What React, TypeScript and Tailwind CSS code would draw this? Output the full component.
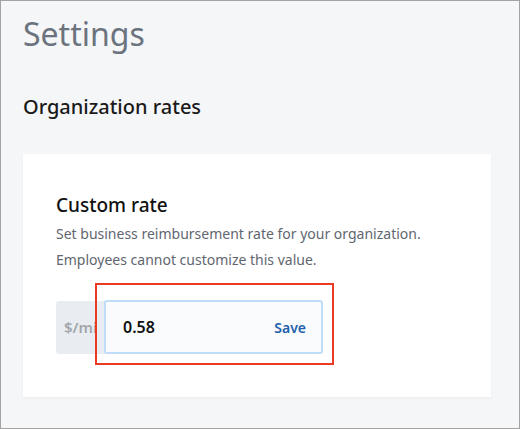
import React from "react";

export default function App() {
  return (
    <div
      className="w-[520px] h-[429px] bg-[#f5f6f8] border border-[#a3a3a3] overflow-hidden"
      style={{ fontFamily: '"Noto Sans", "Open Sans", sans-serif' }}
    >
      <div className="pl-[22px] pt-[11px]">
        <h1 className="text-[32px] leading-[44px] text-[#6b737e] font-normal">Settings</h1>
        <h2 className="mt-[38px] text-[20px] leading-[26px] text-[#1a1a1a] font-medium">Organization rates</h2>
      </div>
      <div className="ml-[22px] mt-[34px] w-[468px] h-[243px] bg-white shadow-[0_1px_3px_rgba(0,0,0,0.04)] pl-[33px] pt-[38px]">
        <h3 className="text-[19px] leading-[26px] text-[#111] font-medium">Custom rate</h3>
        <p className="mt-[3px] text-[14px] leading-[26px] text-[#5f6670]">
          Set business reimbursement rate for your organization.
          <br />
          Employees cannot customize this value.
        </p>
        <div className="relative mt-[27px] flex items-center">
          <div className="w-[60px] h-[53px] rounded-[3px] bg-[#e9edf1] flex items-center pl-[8px] text-[15px] text-[#a2a6ab] font-semibold overflow-hidden">
            $/mi
          </div>
          <div className="-ml-[12px] w-[219px] h-[54px] rounded-[3px] border-2 border-[#bfdcf8] bg-[#fafbfd] flex items-center justify-between pl-[17px] pr-[15px]">
            <span className="text-[16px] font-semibold text-[#111]">0.58</span>
            <span className="text-[14px] font-semibold text-[#2461ab]">Save</span>
          </div>
          <div className="absolute left-[39px] top-[-17px] w-[239px] h-[82px] border-2 border-[#ea3a23]" />
        </div>
      </div>
    </div>
  );
}
